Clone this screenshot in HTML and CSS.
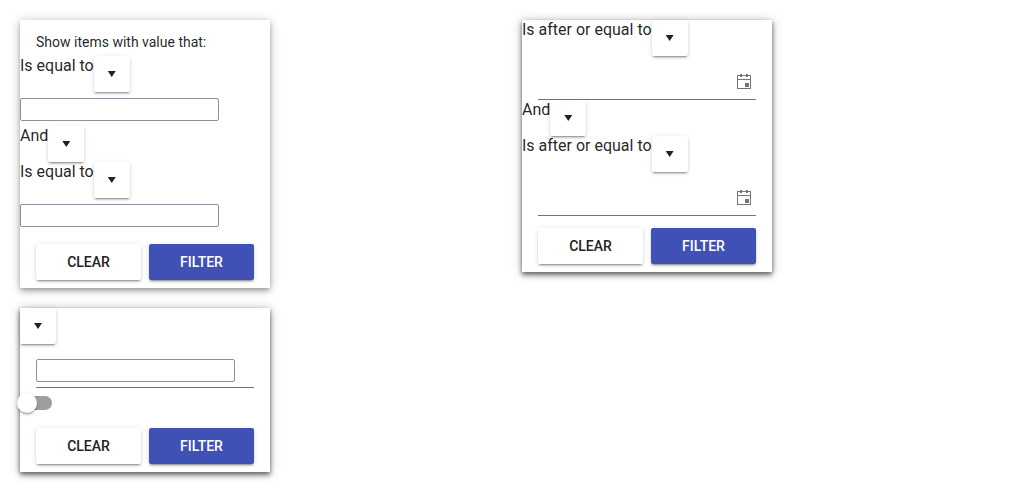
FILE: index.html
```
<!DOCTYPE html>
<html lang="en">
<head>
<meta charset="utf-8">
<title>Filter menus</title>
<link rel="stylesheet" href="styles.css">
</head>
<body>
<main class="page">
  <div class="column">
    <form class="card card-light">
      <div class="title">Show items with value that:</div>
      <div class="select"><span>Is equal to</span><button type="button" class="drop" aria-label="Select"><i class="arrow"></i></button></div>
      <div class="field"><input class="text" aria-label="First value"></div>
      <div class="select"><span>And</span><button type="button" class="drop" aria-label="Select"><i class="arrow"></i></button></div>
      <div class="select"><span>Is equal to</span><button type="button" class="drop" aria-label="Select"><i class="arrow"></i></button></div>
      <div class="field"><input class="text" aria-label="Second value"></div>
      <div class="actions"><button type="button" class="btn">CLEAR</button><button type="button" class="btn primary">FILTER</button></div>
    </form>
    <form class="card">
      <div class="select"><button type="button" class="drop" aria-label="Select"><i class="arrow"></i></button></div>
      <div class="numeric"><input class="text" aria-label="Value"></div>
      <div class="switch"><span class="thumb"></span></div>
      <div class="actions"><button type="button" class="btn">CLEAR</button><button type="button" class="btn primary">FILTER</button></div>
    </form>
  </div>
  <div class="column">
    <form class="card">
      <div class="select"><span>Is after or equal to</span><button type="button" class="drop" aria-label="Select"><i class="arrow"></i></button></div>
      <div class="date"><svg class="calendar" viewBox="0 0 16 16"><path fill-rule="evenodd" d="M1 1h3V0h2v1h4V0h2v1h3v14H1zM2 2v3h12V2h-2v1h-2V2H6v1H4V2zM2 6v8h12V6zM9 9h4v4H9z"/></svg></div>
      <div class="select"><span>And</span><button type="button" class="drop" aria-label="Select"><i class="arrow"></i></button></div>
      <div class="select"><span>Is after or equal to</span><button type="button" class="drop" aria-label="Select"><i class="arrow"></i></button></div>
      <div class="date"><svg class="calendar" viewBox="0 0 16 16"><path fill-rule="evenodd" d="M1 1h3V0h2v1h4V0h2v1h3v14H1zM2 2v3h12V2h-2v1h-2V2H6v1H4V2zM2 6v8h12V6zM9 9h4v4H9z"/></svg></div>
      <div class="actions"><button type="button" class="btn">CLEAR</button><button type="button" class="btn primary">FILTER</button></div>
    </form>
  </div>
</main>
</body>
</html>
```
FILE: styles.css
```
* { box-sizing: border-box; }
body {
  margin: 0;
  background: #fff;
  color: rgba(0,0,0,.87);
  font: 16px/20px Roboto, sans-serif;
}
.page {
  display: grid;
  grid-template-columns: 250px 250px;
  column-gap: 252px;
  padding: 20px;
  align-items: start;
}
.column { display: grid; gap: 20px; }
.card {
  background: #fff;
  padding-bottom: 8px;
  box-shadow: 0 2px 4px rgba(0,0,0,.4), 0 4px 5px rgba(0,0,0,.2), 0 1px 10px rgba(0,0,0,.28);
}
.card-light {
  box-shadow: 0 2px 4px -1px rgba(0,0,0,.2), 0 4px 5px rgba(0,0,0,.14), 0 1px 10px rgba(0,0,0,.24);
}
.title {
  height: 36px;
  padding: 12px 16px 4px;
  font-size: 14px;
}
.select { display: flex; height: 36px; }
.drop {
  width: 36px;
  height: 36px;
  padding: 0;
  border: 0;
  border-radius: 2px;
  background: #fff;
  display: flex;
  align-items: center;
  justify-content: center;
  box-shadow: 0 3px 1px -2px rgba(0,0,0,.2), 0 2px 2px rgba(0,0,0,.14), 0 1px 5px rgba(0,0,0,.12);
}
.arrow {
  width: 8px;
  height: 6px;
  background: #212121;
  clip-path: polygon(0 0, 100% 0, 50% 100%);
}
.field { height: 34px; padding-top: 6px; }
.text {
  display: block;
  width: 199px;
  height: 23px;
  border: 1px solid #8f8f9d;
  border-radius: 2px;
  background: #fff;
  padding: 1px 2px;
}
.numeric {
  height: 36px;
  margin: 8px 16px 0;
  padding-top: 7px;
  border-bottom: 1px solid #757575;
}
.switch {
  width: 26px;
  height: 14px;
  margin: 8px 0 0 6px;
  border-radius: 7px;
  background: #9e9e9e;
}
.thumb {
  display: block;
  width: 20px;
  height: 20px;
  border-radius: 50%;
  background: #fff;
  transform: translate(-9px, -3px);
  box-shadow: 0 3px 1px -2px rgba(0,0,0,.2), 0 2px 2px rgba(0,0,0,.14), 0 1px 5px rgba(0,0,0,.12);
}
.date {
  height: 36px;
  margin: 8px 16px 0;
  border-bottom: 1px solid #757575;
  display: flex;
  justify-content: flex-end;
  padding: 10px 4px 0 0;
}
.calendar { width: 16px; height: 16px; fill: #757575; }
.actions {
  display: grid;
  grid-template-columns: 105px 105px;
  gap: 8px;
  padding: 12px 16px 0;
}
.switch + .actions { padding-top: 18px; }
.btn {
  height: 36px;
  padding: 0;
  border: 0;
  border-radius: 2px;
  background: #fff;
  color: #212121;
  font: 500 14px/20px Roboto, sans-serif;
  box-shadow: 0 3px 1px -2px rgba(0,0,0,.2), 0 2px 2px rgba(0,0,0,.14), 0 1px 5px rgba(0,0,0,.12);
}
.primary { background: #3f51b5; color: #fff; }
```
